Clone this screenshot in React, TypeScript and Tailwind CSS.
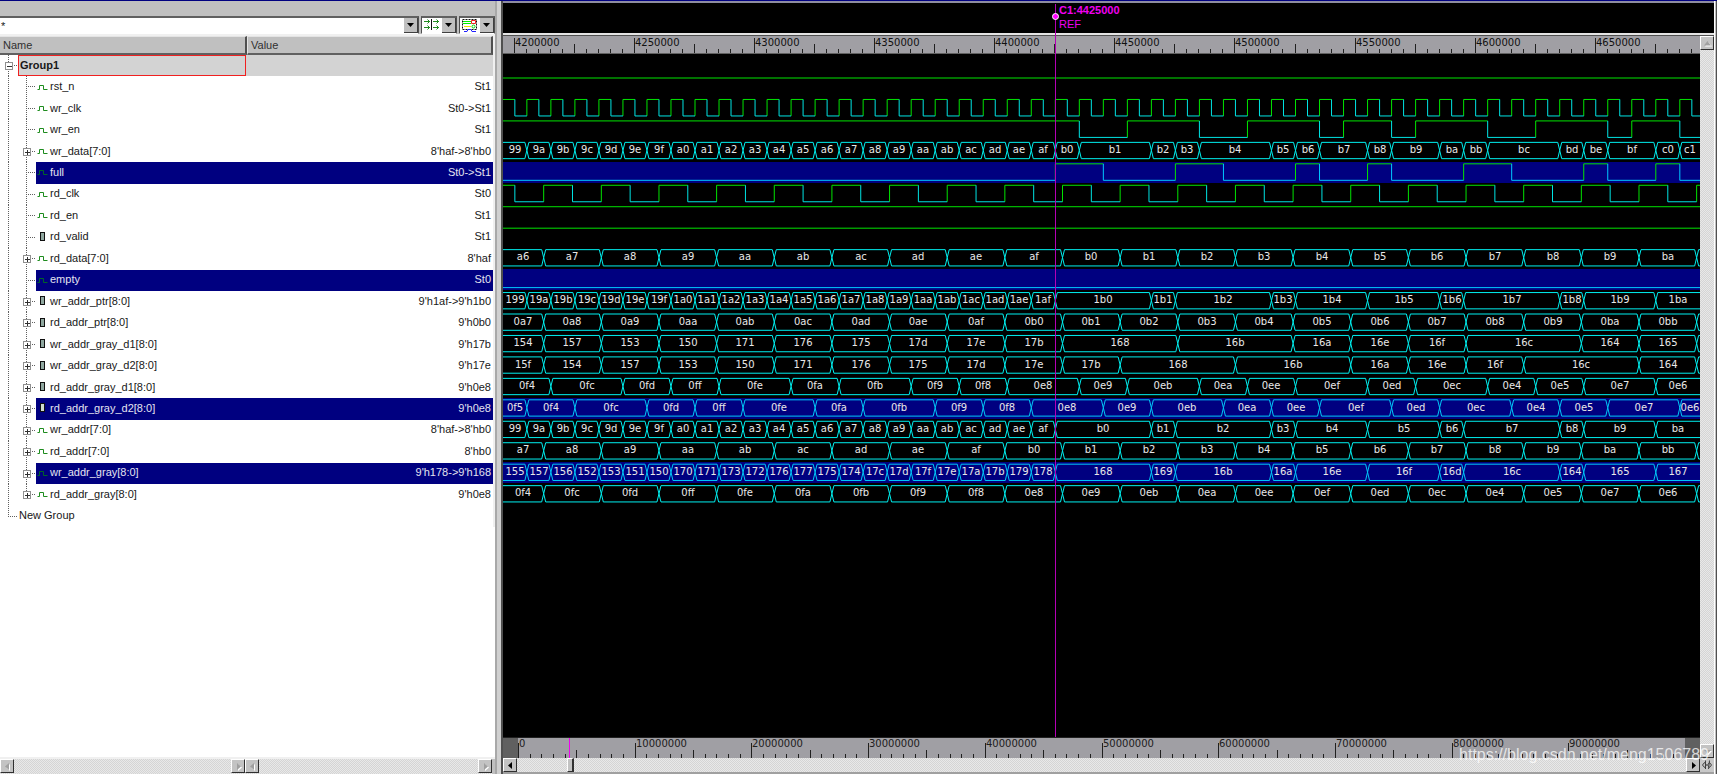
import { FC, ReactNode } from "react";
import clsx from "clsx";

type Icon = "net" | "reg";
type Edge = [number, string];

interface Signal {
  name: string;
  value: string;
  icon: Icon;
  selected?: boolean;
  /* single bit: start level and the clock ticks where it toggles */
  start?: 0 | 1;
  toggles?: number[];
  /* bus: tick and value of each change */
  bus?: Edge[];
}

/* the canvas starts 23 ticks left of the cursor, one tick is 10000 time units */
const CURSOR_X = 552;
const TICK = 24.02;
const ROW = 472 / 22;
const LIMIT = 27;
const FIRST = -23.5;

const tickX = (t: number) => CURSOR_X + 0.3 + t * TICK;
const range = (from: number, step: number, count: number) =>
  Array.from({ length: count }, (_, i) => from + i * step);

const steps = (from: number, step: number, text: string): Edge[] =>
  text.split(" ").map((v, i) => [from + i * step, v]);

const edges = (text: string): Edge[] =>
  text.split(" ").map((pair) => {
    const [t, v] = pair.split(":");
    return [Number(t), v as string];
  });

const rises = range(-21.3, 2.4, 21);
const readClock = [-22.5, ...rises.flatMap((t) => [t, t + 1.2])];

const writePtr: Edge[] = [
  ...steps(
    -23,
    1,
    "99 9a 9b 9c 9d 9e 9f a0 a1 a2 a3 a4 a5 a6 a7 a8 a9 aa ab ac ad ae af"
  ),
  ...edges("0:b0 4:b1 5:b2 9:b3 10:b4 13:b5 16:b6 17:b7 21:b8 22:b9 25:ba"),
];
const readPtr = steps(
  -23.7,
  2.4,
  "a7 a8 a9 aa ab ac ad ae af b0 b1 b2 b3 b4 b5 b6 b7 b8 b9 ba bb bc"
);
const prefix = (p: string, list: Edge[]): Edge[] =>
  list.map(([t, v]) => [t, p + v]);

const signals: Signal[] = [
  { name: "rst_n", value: "St1", icon: "net", start: 1, toggles: [] },
  {
    name: "wr_clk",
    value: "St0->St1",
    icon: "net",
    start: 1,
    toggles: range(-22.5, 0.5, 99),
  },
  {
    name: "wr_en",
    value: "St1",
    icon: "net",
    start: 1,
    toggles: [1, 3, 6, 8, 11, 12, 14, 15, 18, 20, 23, 24, 26],
  },
  {
    name: "wr_data[7:0]",
    value: "8'haf->8'hb0",
    icon: "net",
    bus: [
      ...writePtr.slice(0, 23),
      ...edges(
        "0:b0 1:b1 4:b2 5:b3 6:b4 9:b5 10:b6 11:b7 13:b8 14:b9 16:ba 17:bb 18:bc 21:bd 22:be 23:bf 25:c0 26:c1"
      ),
    ],
  },
  {
    name: "full",
    value: "St0->St1",
    icon: "net",
    selected: true,
    start: 0,
    toggles: [0, 2, 5, 7, 10, 11, 13, 14, 17, 19, 22, 23, 25, 26],
  },
  { name: "rd_clk", value: "St0", icon: "net", start: 1, toggles: readClock },
  { name: "rd_en", value: "St1", icon: "net", start: 1, toggles: [] },
  { name: "rd_valid", value: "St1", icon: "reg", start: 1, toggles: [] },
  {
    name: "rd_data[7:0]",
    value: "8'haf",
    icon: "net",
    bus: steps(
      -23.7,
      2.4,
      "a6 a7 a8 a9 aa ab ac ad ae af b0 b1 b2 b3 b4 b5 b6 b7 b8 b9 ba bb"
    ),
  },
  {
    name: "empty",
    value: "St0",
    icon: "net",
    selected: true,
    start: 0,
    toggles: [],
  },
  {
    name: "wr_addr_ptr[8:0]",
    value: "9'h1af->9'h1b0",
    icon: "reg",
    bus: prefix("1", writePtr),
  },
  {
    name: "rd_addr_ptr[8:0]",
    value: "9'h0b0",
    icon: "reg",
    bus: prefix("0", readPtr),
  },
  {
    name: "wr_addr_gray_d1[8:0]",
    value: "9'h17b",
    icon: "reg",
    bus: [
      ...steps(-23.7, 2.4, "154 157 153 150 171 176 175 17d 17e 17b"),
      ...edges(
        "0.3:168 5.1:16b 9.9:16a 12.3:16e 14.7:16f 17.1:16c 21.9:164 24.3:165 26.7:167"
      ),
    ],
  },
  {
    name: "wr_addr_gray_d2[8:0]",
    value: "9'h17e",
    icon: "reg",
    bus: [
      ...steps(-23.7, 2.4, "15f 154 157 153 150 171 176 175 17d 17e 17b"),
      ...edges(
        "2.7:168 7.5:16b 12.3:16a 14.7:16e 17.1:16f 19.5:16c 24.3:164 26.7:165"
      ),
    ],
  },
  {
    name: "rd_addr_gray_d1[8:0]",
    value: "9'h0e8",
    icon: "reg",
    bus: edges(
      "-23:0f4 -21:0fc -18:0fd -16:0ff -14:0fe -11:0fa -9:0fb -6:0f9 -4:0f8 -2:0e8 1:0e9 3:0eb 6:0ea 8:0ee 10:0ef 13:0ed 15:0ec 18:0e4 20:0e5 22:0e7 25:0e6"
    ),
  },
  {
    name: "rd_addr_gray_d2[8:0]",
    value: "9'h0e8",
    icon: "reg",
    selected: true,
    bus: edges(
      "-23:0f5 -22:0f4 -20:0fc -17:0fd -15:0ff -13:0fe -10:0fa -8:0fb -5:0f9 -3:0f8 -1:0e8 2:0e9 4:0eb 7:0ea 9:0ee 11:0ef 14:0ed 16:0ec 19:0e4 21:0e5 23:0e7 26:0e6"
    ),
  },
  {
    name: "wr_addr[7:0]",
    value: "8'haf->8'hb0",
    icon: "net",
    bus: writePtr,
  },
  { name: "rd_addr[7:0]", value: "8'hb0", icon: "net", bus: readPtr },
  {
    name: "wr_addr_gray[8:0]",
    value: "9'h178->9'h168",
    icon: "net",
    selected: true,
    bus: [
      ...steps(
        -23,
        1,
        "155 157 156 152 153 151 150 170 171 173 172 176 177 175 174 17c 17d 17f 17e 17a 17b 179 178"
      ),
      ...edges(
        "0:168 4:169 5:16b 9:16a 10:16e 13:16f 16:16d 17:16c 21:164 22:165 25:167"
      ),
    ],
  },
  {
    name: "rd_addr_gray[8:0]",
    value: "9'h0e8",
    icon: "net",
    bus: steps(
      -23.7,
      2.4,
      "0f4 0fc 0fd 0ff 0fe 0fa 0fb 0f9 0f8 0e8 0e9 0eb 0ea 0ee 0ef 0ed 0ec 0e4 0e5 0e7 0e6 0e2"
    ),
  },
];

const BitWave: FC<{ signal: Signal; hi: number }> = ({ signal, hi }) => {
  const lo = hi + 16.5;
  const marks = [FIRST, ...(signal.toggles ?? []), 60];
  let green = "";
  let cyan = "";
  marks.slice(0, -1).forEach((t, i) => {
    const high = (signal.start === 1) === (i % 2 === 0);
    const x1 = tickX(t);
    const x2 = tickX(marks[i + 1] as number);
    if (high) green += i ? `M${x1} ${lo}V${hi}H${x2}` : `M${x1} ${hi}H${x2}`;
    else cyan += i ? `M${x1} ${hi}V${lo}H${x2}` : `M${x1} ${lo}H${x2}`;
  });
  return (
    <>
      <path d={green} stroke="#00e400" fill="none" />
      <path
        d={cyan}
        stroke={signal.selected ? "#00c8ff" : "#00e4e4"}
        fill="none"
      />
    </>
  );
};

const BusWave: FC<{ signal: Signal; hi: number }> = ({ signal, hi }) => {
  const lo = hi + 16.3;
  const mid = hi + 8;
  const list = signal.bus ?? [];
  const cells = list.map(([t, v], i) => {
    const x1 = Math.max(0, tickX(t));
    const next = list[i + 1];
    /* the last value is centred in what is left of the window */
    const x2 = next ? tickX(next[0]) : tickX(LIMIT - 0.17);
    return { v, x1, x2, first: i === 0, last: !next };
  });
  return (
    <>
      {cells.map(({ v, x1, x2, first, last }) => {
        const a = first ? x1 : x1 + 2;
        const b = last ? 2000 : x2 - 2;
        const left = first ? `M${a} ${lo}M${a} ${hi}` : `M${x1} ${mid}L${a} ${hi}`;
        const right = last
          ? `H${b}M${b} ${lo}`
          : `H${b}L${x2} ${mid}L${b} ${lo}`;
        return (
          <g key={x1}>
            <path
              d={`${left}${right}H${a}${first ? "" : `L${x1} ${mid}`}`}
              stroke={signal.selected ? "#00c8f8" : "#00f0f0"}
              fill="none"
            />
            {/* no room for a value in a narrow cell */}
            {x2 - x1 > 12 && (
              <text
                x={Math.round((x1 + x2) / 2)}
                y={Math.round(hi + 10.7)}
                textAnchor="middle"
                fill="#e8e8e8"
              >
                {v}
              </text>
            )}
          </g>
        );
      })}
    </>
  );
};

const Waves: FC = () => (
  <svg
    className="min-h-0 w-full flex-1 bg-black font-['DejaVu_Sans',sans-serif] text-[10px]"
    aria-label="Waveforms"
  >
    {signals.map((s, i) => {
      const hi = 2.55 + ROW * (i + 1);
      return (
        <g key={s.name}>
          {s.selected && (
            <rect
              y={Math.round(hi - 2.3)}
              width="100%"
              height="21"
              fill="#000080"
            />
          )}
          {s.bus ? <BusWave signal={s} hi={hi} /> : <BitWave signal={s} hi={hi} />}
        </g>
      );
    })}
  </svg>
);

const TimeRuler: FC = () => (
  <svg
    className="h-[18px] w-full shrink-0 border-b border-[#606060] bg-[#a09fa4] font-['DejaVu_Sans',sans-serif] text-[10px]"
    shapeRendering="crispEdges"
  >
    {range(-22.5, 0.5, 130).map((t, i) => (
      <path
        key={t}
        d={`M${Math.round(tickX(t)) - 0.5} 17v${
          i % 10 === 0 ? -15 : i % 5 === 0 ? -9 : -4
        }`}
        stroke="#202020"
      />
    ))}
    {range(-22.5, 5, 10).map((t, i) => (
      <text key={t} x={Math.round(tickX(t))} y="10" fill="#101010">
        {4200000 + i * 50000}
      </text>
    ))}
  </svg>
);

const Overview: FC = () => (
  <div className="flex h-[21px] shrink-0 border-t border-[#202020]">
    <div className="w-[15px] bg-[#606060]" />
    <svg
      className="h-full min-w-0 flex-1 bg-[#a09fa4] font-['DejaVu_Sans',sans-serif] text-[10px]"
      shapeRendering="crispEdges"
    >
      {range(0, 1, 100).map((m) => (
        <path
          key={m}
          d={`M${Math.round(m * 11.67) + 0.5} 20v${
            m % 10 === 0 ? -15 : m % 5 === 0 ? -8 : -4
          }`}
          stroke="#202020"
        />
      ))}
      {range(0, 10, 10).map((m) => (
        <text key={m} x={Math.round(m * 11.67) + 1} y="9" fill="#202020">
          {m * 1000000}
        </text>
      ))}
      <path d="M51.5 0v20" stroke="#f000f0" />
    </svg>
    <div className="w-[15px] bg-[#606060]" />
  </div>
);

const TRACK =
  "bg-[#dedede] bg-[repeating-conic-gradient(#d4d4d4_0_25%,#e8e8e8_0_50%)] bg-[length:2px_2px]";

const arrows = {
  left: "M8 3v7L4 6.5z",
  right: "M5 3v7L9 6.5z",
  up: "M3 8.5h7L6.5 4z",
  down: "M3 5h7L6.5 9z",
};

const ArrowButton: FC<{
  dir: keyof typeof arrows;
  label: string;
  dim?: boolean;
}> = ({ dir, label, dim }) => (
  <button
    type="button"
    aria-label={label}
    className="flex h-[14px] w-[14px] shrink-0 items-center justify-center border border-t-white border-r-[#303030] border-b-[#303030] border-l-white bg-[#c3c3c3]"
  >
    <svg viewBox="0 0 13 13" className="h-[13px] w-[13px] shrink-0">
      {dim && (
        <path d={arrows[dir]} fill="#ffffff" transform="translate(1 1)" />
      )}
      <path d={arrows[dir]} fill={dim ? "#a0a0a0" : "#000000"} />
    </svg>
  </button>
);

const HScroll: FC<{ name: string; className: string }> = ({
  name,
  className,
}) => (
  <div className={clsx("flex h-[15px] justify-between", TRACK, className)}>
    <ArrowButton dir="left" label={`Scroll ${name} left`} dim />
    <ArrowButton dir="right" label={`Scroll ${name} right`} dim />
  </div>
);

const Guides: FC<{ box?: "+" | "-"; x: number; kind: string }> = ({
  box,
  x,
  kind,
}) => (
  <svg className="h-full w-full" shapeRendering="crispEdges">
    <g stroke="#606060" strokeDasharray="1 1">
      {x > 10 && <line x1="8.5" x2="8.5" y1="0" y2="100%" />}
      <line
        x1={x}
        x2={x}
        y1="0"
        y2={kind === "end" ? "50%" : "100%"}
      />
      <line x1={x + 1} x2={x + 8} y1="50%" y2="50%" />
    </g>
    {box && (
      <svg y="50%" x={x - 4} className="overflow-visible">
        <rect
          x="0.5"
          y="-3.5"
          width="7"
          height="7"
          fill="#ffffff"
          stroke="#909090"
        />
        <path
          d={box === "+" ? "M2 0.5h5M4.5 -2v5" : "M2 0.5h5"}
          stroke="#303030"
        />
      </svg>
    )}
  </svg>
);

const SignalIcon: FC<{ icon: Icon; selected?: boolean }> = ({
  icon,
  selected,
}) => (
  <svg
    className="h-[11px] w-[13px] shrink-0"
    fill="none"
    viewBox="0 0 13 11"
    aria-hidden
  >
    {icon === "net" ? (
      <path
        d="M1.5 8.5H3.5V4.5H7.5V8.5H11.5"
        stroke={selected ? "#006428" : "#1e8c1e"}
      />
    ) : (
      <rect
        x="4.5"
        y="1.5"
        width="4"
        height="8"
        fill={selected ? "#d0dcd0" : "#90a8a0"}
        stroke="#101010"
      />
    )}
  </svg>
);

const SignalRow: FC<{ signal: Signal; last: boolean }> = ({ signal, last }) => {
  const { name, value, icon, selected, bus } = signal;
  const kind = last ? "end" : "mid";
  return (
    <tr className="grid min-h-0 grid-cols-[246px_1fr]">
      <td className="flex min-h-0 p-0">
        {bus ? (
          <button
            type="button"
            aria-label={`Expand ${name}`}
            className="h-full w-9 shrink-0"
          >
            <Guides box="+" x={26.5} kind={kind} />
          </button>
        ) : (
          <span className="h-full w-9 shrink-0">
            <Guides x={26.5} kind={kind} />
          </span>
        )}
        <span
          className={clsx(
            "flex min-w-0 flex-1 items-center gap-px pb-[2px]",
            selected && "bg-[#000080] text-[#e4e4f0]"
          )}
        >
          <SignalIcon icon={icon} selected={selected} />
          {name}
        </span>
      </td>
      <td
        className={clsx(
          "flex min-h-0 items-center justify-end p-0 pr-[2px] pb-[2px]",
          selected && "bg-[#000080] text-[#e4e4f0]"
        )}
      >
        {value}
      </td>
    </tr>
  );
};

const SignalTable: FC = () => (
  <table className="block w-full border-r-2 border-[#f0f0f0] bg-white">
    <thead className="block">
      <tr className="grid h-[19px] grid-cols-[247px_1fr] bg-[#c0c0c0] text-[#303030]">
        <th className="flex items-center border-t border-r-2 border-b-2 border-t-[#e4e4e4] border-r-[#505050] border-b-[#606060] px-[3px] font-normal">
          Name
        </th>
        <th className="flex items-center border-t border-r-2 border-b-2 border-l border-t-[#e4e4e4] border-r-[#505050] border-b-[#606060] border-l-[#e4e4e4] px-[3px] font-normal">
          Value
        </th>
      </tr>
    </thead>
    <tbody className="grid h-[472px] grid-rows-[repeat(22,minmax(0,1fr))]">
      <tr className="grid min-h-0 grid-cols-[246px_1fr]">
        <td className="flex min-h-0 p-0">
          <button
            type="button"
            aria-label="Collapse Group1"
            className="h-full w-[18px] shrink-0"
          >
            <Guides box="-" x={8.5} kind="mid" />
          </button>
          <span className="flex flex-1 items-center border border-[#f02020] bg-[#d3d3d3] px-px pb-[2px] font-bold">
            Group1
          </span>
        </td>
        <td className="bg-[#d3d3d3] p-0" />
      </tr>
      {signals.map((s, i) => (
        <SignalRow key={s.name} signal={s} last={i === signals.length - 1} />
      ))}
      <tr className="grid min-h-0 grid-cols-[246px_1fr]">
        <td className="flex min-h-0 p-0">
          <span className="h-full w-[19px] shrink-0">
            <Guides x={8.5} kind="end" />
          </span>
          <span className="flex items-center pb-[2px]">New Group</span>
        </td>
        <td className="p-0" />
      </tr>
    </tbody>
  </table>
);

const Field: FC<{ children: ReactNode; label: string; className: string }> = ({
  children,
  label,
  className,
}) => (
  <div
    className={clsx(
      "flex border-t-2 border-r border-b border-t-[#606060] border-r-[#505050] border-b-white bg-white",
      className
    )}
  >
    {children}
    <button
      type="button"
      aria-label={label}
      className="flex w-[14px] shrink-0 items-center justify-center border-r border-b border-[#404040] bg-[#c0c0c0]"
    >
      <svg viewBox="0 0 7 4" className="h-1 w-[7px]">
        <path d="M0 0h7L3.5 4z" />
      </svg>
    </button>
  </div>
);

const Toolbar: FC = () => (
  <div className="flex h-[18px] gap-[2px]">
    <Field label="Show filter history" className="min-w-0 flex-1">
      <input
        type="text"
        aria-label="Signal filter"
        defaultValue="*"
        className="h-full min-w-0 flex-1 px-px text-[11px] outline-none"
      />
    </Field>
    <Field label="Edge search" className="w-9 border-l border-l-[#505050]">
      <svg
        viewBox="0 0 20 15"
        className="h-[15px] w-5 shrink-0"
        fill="none"
      >
        <path
          d="M2 3.5h6M2 9.5h6M11 3.5h6M11 9.5h6M5.5 1.5L7.5 3.5L5.5 5.5M5.5 7.5L7.5 9.5L5.5 11.5M14.5 1.5L16.5 3.5L14.5 5.5M14.5 7.5L16.5 9.5L14.5 11.5"
          stroke="#208c20"
        />
        <path d="M9.5 1v11" stroke="#101010" />
      </svg>
    </Field>
    <Field label="Wave display" className="w-9 border-l border-l-[#505050]">
      <svg
        viewBox="0 0 20 15"
        className="h-[15px] w-5 shrink-0"
        fill="none"
      >
        <rect
          x="2.5"
          y="1.5"
          width="14"
          height="10"
          stroke="#101010"
          strokeDasharray="2 1"
        />
        <path d="M3 3.5h8M3 5.5h8" stroke="#00f000" />
        <path d="M4 8.5h7" stroke="#f0e000" />
        <path d="M11.5 2.5h4v3h-4z" stroke="#f02020" />
        <circle cx="13.5" cy="8.5" r="1.5" stroke="#00d000" />
        <path d="M4 13.5h3l1-2h3l1 2h4" stroke="#2020ff" />
      </svg>
    </Field>
  </div>
);

const SignalPane: FC = () => (
  <section className="flex w-[495px] shrink-0 flex-col pt-[15px]">
    <Toolbar />
    <div className="h-[2px] bg-[#f0f0f0]" />
    <SignalTable />
    <div className="flex-1 bg-white" />
    <div className="flex h-[17px] shrink-0 border-t-2 border-[#f0f0f0]">
      <HScroll name="names" className="w-[245px]" />
      <HScroll name="values" className="w-[247px]" />
    </div>
  </section>
);

const WavePane: FC = () => (
  <section className="flex min-w-0 flex-1 flex-col border-t-2 border-[#8e8ca0] bg-[#dedede]">
    <div className="h-[30px] shrink-0 bg-black pl-[556px] text-[11px] leading-[14px] text-[#f000f0]">
      <div className="font-bold">C1:4425000</div>
      <div>REF</div>
    </div>
    <div className="h-[3px] shrink-0 border-t-2 border-b border-t-[#e4e4e4] border-b-[#505050] bg-[#505050]" />
    <div className="flex min-h-0 flex-1">
      <div className="flex min-w-0 flex-1 flex-col">
        <TimeRuler />
        <Waves />
        <Overview />
      </div>
      <div
        className={clsx("flex w-[14px] flex-col justify-between", TRACK)}
      >
        <ArrowButton dir="up" label="Scroll up" dim />
        <ArrowButton dir="down" label="Scroll down" dim />
      </div>
    </div>
    <div className="flex h-4 shrink-0 border-b-2 border-[#a0a0a0]">
      <div className={clsx("flex flex-1", TRACK)}>
        <ArrowButton dir="left" label="Scroll back in time" />
        <div className="flex-1 pl-[50px]">
          <div className="h-[14px] w-[7px] border-t border-r-2 border-b border-l border-t-white border-r-[#303030] border-b-[#303030] border-l-white bg-[#c3c3c3]" />
        </div>
        <ArrowButton dir="right" label="Scroll forward in time" />
      </div>
      <button
        type="button"
        aria-label="Zoom to fit"
        className="flex w-[14px] items-center justify-center bg-[#c8c8c8]"
      >
        <svg viewBox="0 0 12 12" className="h-3 w-3" fill="none">
          <path
            d="M3.5 3.5L1.5 6L3.5 8.5L5.5 6zM8.5 3.5L6.5 6L8.5 8.5L10.5 6zM4.5 1.5V10M8.5 1.5L7.5 10"
            stroke="#404040"
          />
        </svg>
      </button>
    </div>
  </section>
);

export default function App() {
  return (
    <main className="relative flex h-screen overflow-hidden border-t border-[#000080] bg-[#c0c0c0] font-['Liberation_Sans',Arial,sans-serif] text-[11px] leading-[14px] text-[#181818]">
      <SignalPane />
      <div className="w-2 shrink-0 border-r-2 border-l-2 border-r-[#505050] border-l-[#a8a8a8] bg-[#d0d0d0]" />
      <div className="relative flex min-w-0 flex-1">
        <WavePane />
        <div className="pointer-events-none absolute top-[3px] bottom-[37px] left-[552px] w-px bg-[#b400b4]" />
        <div className="pointer-events-none absolute top-3 left-[549px] h-[7px] w-[7px] rounded-full border border-white bg-[#ff00ff]" />
      </div>
      <div className="w-[3px] shrink-0 border-r border-l border-r-[#505050] border-l-white bg-[#c0c0c0]" />
      <span className="pointer-events-none absolute right-2 bottom-[9px] text-[16px] leading-5 text-white/75">
        https://blog.csdn.net/meng1506789
      </span>
    </main>
  );
}
